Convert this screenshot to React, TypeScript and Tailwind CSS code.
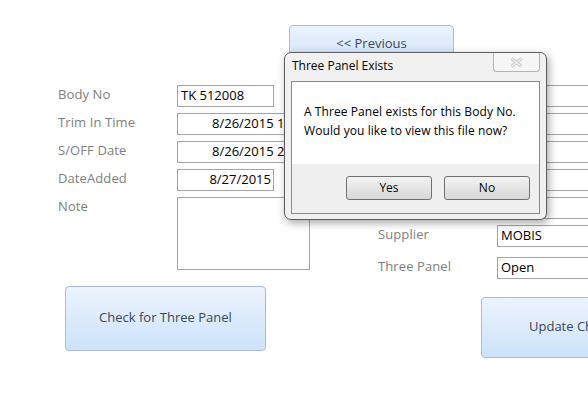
const font = { fontFamily: '"Open Sans", "DejaVu Sans", sans-serif' }

const Box = ({ w, h = 22, children, right = false, pl = 3 }: { w: number; h?: number; children?: React.ReactNode; right?: boolean; pl?: number }) => (
  <div
    className={`border border-[#a5a5a5] bg-white text-[13px] text-black leading-[19px] overflow-hidden whitespace-nowrap ${right ? 'text-right pr-[2px]' : ''}`}
    style={{ width: w, height: h, paddingLeft: pl }}
  >
    {children}
  </div>
)

const Row = ({ label, children }: { label: string; children: React.ReactNode }) => (
  <div className="flex items-start h-[22px]">
    <div className="w-[119px] text-[13px] text-[#808080] leading-[19px] tracking-[0.1px]">{label}</div>
    {children}
  </div>
)

const BlueButton = ({ children, className }: { children: React.ReactNode; className: string }) => (
  <button
    className={`rounded-[4px] border border-[#a9bcd3] bg-gradient-to-b from-[#ecf3fd] to-[#cde3fa] text-[13px] text-[#3b4756] ${className}`}
  >
    {children}
  </button>
)

export default function App() {
  return (
    <div className="relative w-[588px] h-[408px] overflow-hidden bg-white" style={font}>
      <div className="pt-[25px] pl-[289px]">
        <BlueButton className="w-[165px] h-[40px] flex items-start justify-center pt-[8px]">&lt;&lt; Previous</BlueButton>
      </div>

      <div className="flex mt-[20px]">
        <div className="w-[378px] shrink-0 pl-[58px] flex flex-col gap-[6px]">
          <Row label="Body No">
            <Box w={97}>TK 512008</Box>
          </Row>
          <Row label="Trim In Time">
            <Box w={108} pl={34}>8/26/2015 1:42:18 PM</Box>
          </Row>
          <Row label="S/OFF Date">
            <Box w={108} pl={34}>8/26/2015 2:15:06 PM</Box>
          </Row>
          <Row label="DateAdded">
            <Box w={97} right>8/27/2015</Box>
          </Row>
          <div className="flex items-start">
            <div className="w-[119px] text-[13px] text-[#808080] leading-[19px] tracking-[0.1px]">Note</div>
            <Box w={133} h={73} />
          </div>
          <BlueButton className="mt-[10px] ml-[7px] w-[201px] h-[65px] pb-[2px]">Check for Three Panel</BlueButton>
        </div>

        <div className="flex flex-col">
          <div className="flex flex-col gap-[6px] pl-[119px]">
            <Box w={120} />
            <Box w={120} />
            <Box w={120} />
            <Box w={120} />
            <Box w={120} />
          </div>
          <div className="mt-[6px] flex items-start h-[22px]">
            <div className="w-[119px] text-[13px] text-[#808080] leading-[19px] tracking-[0.1px]">Supplier</div>
            <Box w={120}>MOBIS</Box>
          </div>
          <div className="mt-[10px] flex items-start h-[22px]">
            <div className="w-[119px] text-[13px] text-[#808080] leading-[19px] tracking-[0.1px]">Three Panel</div>
            <Box w={120}>Open</Box>
          </div>
          <BlueButton className="mt-[18px] ml-[103px] w-[140px] h-[61px] text-left pl-[47px] pb-[2px] whitespace-nowrap">Update Changes</BlueButton>
        </div>
      </div>

      {/* message box */}
      <div className="absolute left-[284px] top-[52px] w-[263px] h-[168px] rounded-[7px] border border-[#5e5e5e] bg-[#f1f1f1] shadow-[2px_3px_8px_rgba(0,0,0,0.35)]">
        <div className="flex h-[28px] items-start">
          <div className="pl-[7px] pt-[5px] text-[12px] leading-[16px] text-black">Three Panel Exists</div>
          <div className="ml-auto mr-[6px] w-[47px] h-[19px] rounded-b-[4px] border border-t-0 border-[#b3b3b3] bg-[#f6f6f6] flex items-center justify-center">
            <svg width="13" height="11" viewBox="0 0 13 11">
              <path d="M1.5 1.5 L11.5 9.5 M11.5 1.5 L1.5 9.5" stroke="#c4c4c4" strokeWidth="3" />
              <path d="M1.5 1.5 L11.5 9.5 M11.5 1.5 L1.5 9.5" stroke="#f6f6f6" strokeWidth="1.2" />
            </svg>
          </div>
        </div>
        <div className="mx-[6px] h-[133px] border border-[#8a8a8a] flex flex-col">
          <div className="h-[82px] bg-white pl-[12px] pt-[20px] text-[12px] leading-[19px] text-black tracking-[0.08px]">
            <div>A Three Panel exists for this Body No.</div>
            <div>Would you like to view this file now?</div>
          </div>
          <div className="flex-1 bg-[#f0f0f0] flex gap-[12px] pl-[54px] pt-[12px]">
            <button className="w-[86px] h-[24px] rounded-[3px] border border-[#707070] bg-gradient-to-b from-[#f2f2f2] to-[#d8d8d8] text-[12px] text-black">Yes</button>
            <button className="w-[86px] h-[24px] rounded-[3px] border border-[#707070] bg-gradient-to-b from-[#f2f2f2] to-[#d8d8d8] text-[12px] text-black">No</button>
          </div>
        </div>
      </div>
    </div>
  )
}
